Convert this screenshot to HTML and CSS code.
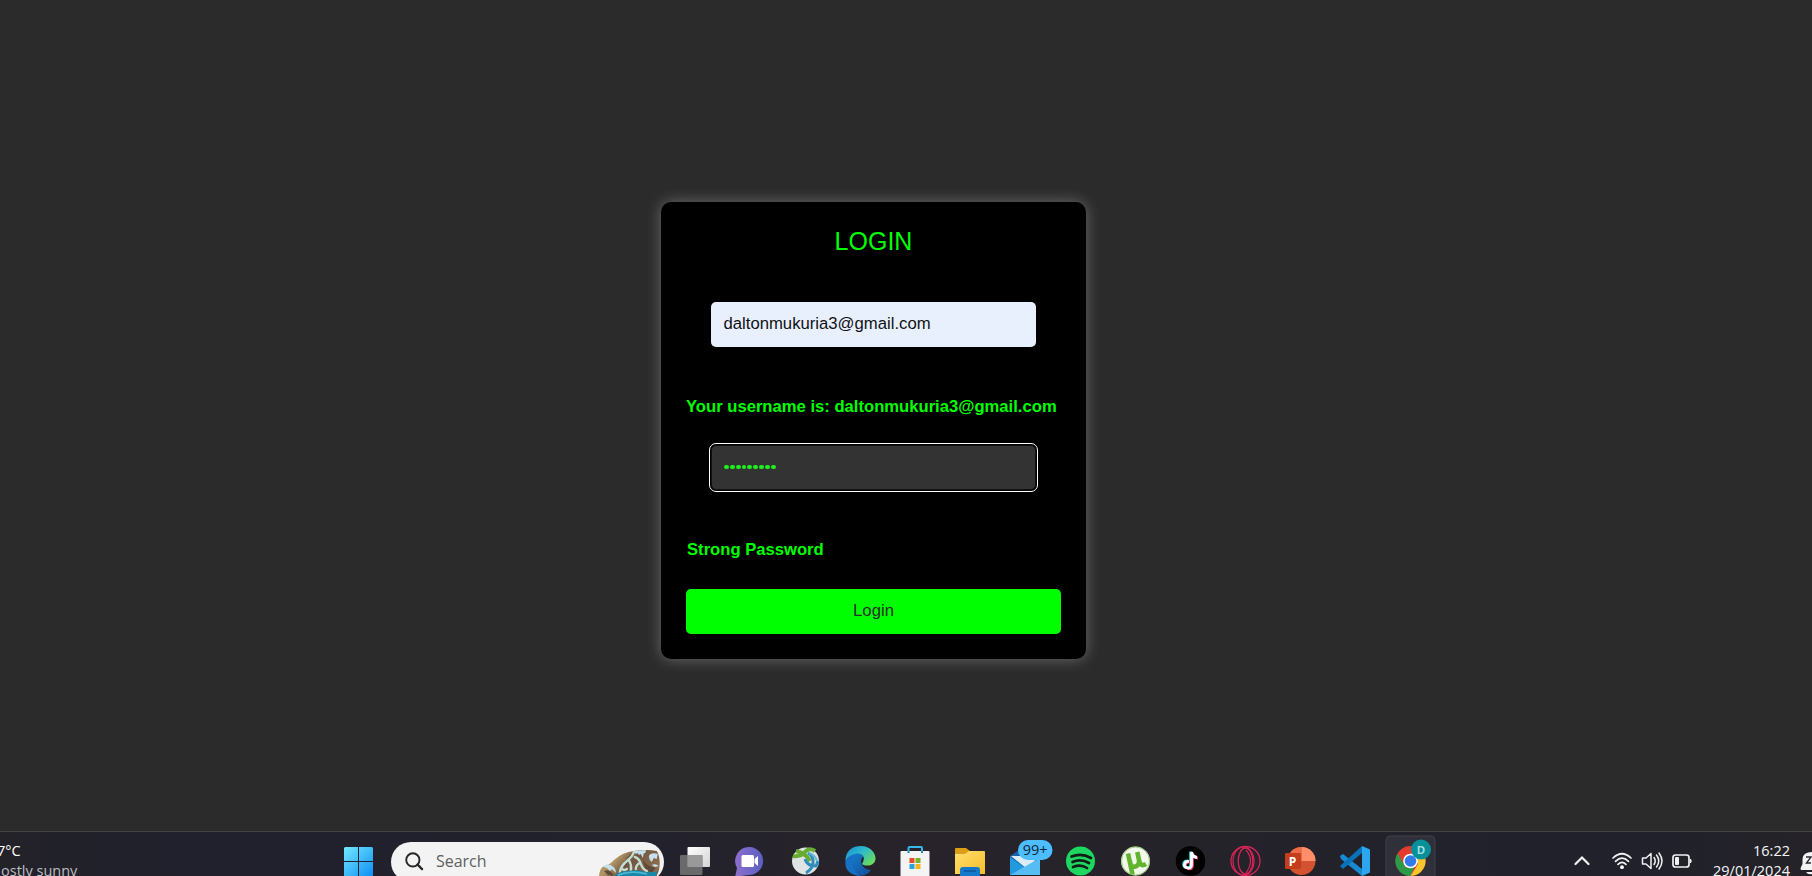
FILE: index.html
```html
<!DOCTYPE html>
<html lang="en">
<head>
<meta charset="utf-8">
<title>Login</title>
<link rel="stylesheet" href="styles.css">
</head>
<body>
<main class="page">
  <form class="card">
    <h1 class="title">LOGIN</h1>
    <input class="field field-user" type="text" value="daltonmukuria3@gmail.com">
    <p class="note">Your username is: daltonmukuria3@gmail.com</p>
    <div class="field field-pass"><i></i><i></i><i></i><i></i><i></i><i></i><i></i><i></i><i></i></div>
    <p class="note note-strength">Strong Password</p>
    <button class="submit" type="button">Login</button>
  </form>
</main>
<footer class="taskbar">
  <div class="weather"><span class="temp">7°C</span><span class="sky">ostly sunny</span></div>
  <svg class="start" viewBox="0 0 30 30"><defs><linearGradient id="win" x1="0" y1="0" x2="30" y2="30" gradientUnits="userSpaceOnUse"><stop stop-color="#74e8fd"/><stop offset="1" stop-color="#0a8cf5"/></linearGradient></defs><path fill="url(#win)" d="M1 0H14V14H0V1ZM15 0H28L29 1V14H15ZM0 15H14V29H0ZM15 15H29V29H15Z"/></svg>
  <div class="search">
    <svg class="lens" viewBox="0 0 20 20"><circle cx="8.3" cy="8.3" r="7" fill="none" stroke="#26262b" stroke-width="2"/><path d="M13.2 13.2L18 18" stroke="#26262b" stroke-width="2.5" stroke-linecap="round"/></svg>
    <span class="search-text">Search</span>
    <svg class="art" viewBox="0 0 66 37">
      <defs><linearGradient id="rock" x2="1" y2=".4"><stop stop-color="#a18256"/><stop offset=".35" stop-color="#b29567"/><stop offset=".6" stop-color="#705640"/><stop offset="1" stop-color="#8a6b4c"/></linearGradient></defs>
      <path fill="url(#rock)" d="M1 37Q1 28 6 25Q12 24 16 19Q25 11 36 10Q50 8 59 10Q62 14 62 23Q62 31 58 37Z"/>
      <path fill="#5f4a38" d="M24 25Q30 14 36 11L34 16 27 26ZM45 19Q50 26 58 27L54 32 48 29ZM6 30Q12 27 16 35L10 34Z"/>
      <path d="M22 31Q23 25 29 20T36 11M31 19Q34 24 33 29M37 16Q41 17 43 23T49 30M24 28Q27 30 29 28M42 22Q38 24 38 28" fill="none" stroke="#c4ddd0" stroke-width="2.4" stroke-linecap="round"/>
      <path fill="#c5e1f0" d="M36 10L48 9Q48 13 46 12L45 17 43 13 41 14 40 12 38 13ZM51 15Q53 11 60 13L59 18 56 17 54 21 52 19ZM5 26Q9 21 14 25Q18 27 18 32L14 28 12 30 9 27ZM54 24Q58 22 61 25L57 26Z"/>
      <path fill="#1687ad" d="M15 37Q20 30 30 30Q40 28 48 31Q55 32 60 30L57 37Z"/><path d="M20 34Q34 29 49 33" stroke="#4fb5cc" stroke-width="1.7" fill="none"/>
    </svg>
  </div>
  <nav class="apps">
    <svg viewBox="0 0 55 45"><defs><linearGradient id="tv" x2="1" y2="1"><stop stop-color="#fff"/><stop offset="1" stop-color="#d3d3d3"/></linearGradient></defs><rect x="19.5" y="16" width="22.5" height="20" rx="1" fill="url(#tv)"/><rect x="12" y="24" width="22.5" height="20" rx="1" fill="#777" opacity=".85"/><path d="M19.5 24H34.5V36H19.5Z" fill="#999"/></svg>
    <svg viewBox="0 0 55 45"><defs><linearGradient id="chat" x2="1" y2="0"><stop stop-color="#8d70cd"/><stop offset="1" stop-color="#5b5fc1"/></linearGradient></defs><path fill="url(#chat)" d="M12.3 45L14 37A14 14 0 1 1 26 44L18 45Z"/><rect x="18.5" y="24" width="12.5" height="12" rx="1.5" fill="#fff"/><path d="M31.5 28L35 25V35L31.5 32Z" fill="#fff"/></svg>
    <svg viewBox="0 0 55 45"><circle cx="27.5" cy="30" r="13.5" fill="#dfe3e4"/><path d="M15 25Q23 26 27 21T37 20M18 20Q28 22 32 30" fill="none" stroke="#68ad32" stroke-width="4"/><path d="M28 42Q36 37 35 29Q34 24 30 22M27 28Q29 35 38 35Q39 33 40 30" fill="none" stroke="#2d8ebd" stroke-width="3"/><path d="M31 22Q37 24 39 30" fill="none" stroke="#62b8d4" stroke-width="2"/></svg>
    <svg viewBox="0 0 55 45"><defs><linearGradient id="e1" x2="1" y2=".7"><stop stop-color="#168bd2"/><stop offset=".5" stop-color="#2eb9ce"/><stop offset="1" stop-color="#69dc5b"/></linearGradient><linearGradient id="e2" x2="1" y2="1"><stop stop-color="#168ad4"/><stop offset="1" stop-color="#134b9c"/></linearGradient></defs><path fill="url(#e2)" d="M12.5 29C14 14 35 17 34 26C26 23 25 38 38 39C32 49 13 46 12.5 29Z"/><path fill="url(#e1)" d="M12.5 29C13 19 20 15 28 15C37 15 43 22 42.5 28C42 35 33 36 29 33C36 22 22 18 12.5 29Z"/><path d="M23 25Q14 35 27 45Q11 43 12.5 30Q16 23 23 25" fill="#1870c5"/></svg>
    <svg viewBox="0 0 55 45"><path d="M20.5 22V17Q20.5 16 21.5 16H33Q34 16 34 17V22" fill="none" stroke="#39b7ed" stroke-width="2"/><path fill="#f4f4f4" d="M12.5 21Q12.5 20 13.5 20H40.5Q41.5 20 41.5 21V45H12.5Z"/><path d="M20.5 20V22M34 20V22" stroke="#168cc5" stroke-width="2"/><path fill="#e64c25" d="M21.5 27H26.5V32H21.5Z"/><path fill="#77b326" d="M27.5 27H32.5V32H27.5Z"/><path fill="#29a2dd" d="M21.5 33H26.5V38H21.5Z"/><path fill="#f4b21b" d="M27.5 33H32.5V38H27.5Z"/></svg>
    <svg viewBox="0 0 55 45"><defs><linearGradient id="fold" x2="1" y2="1"><stop stop-color="#ffdf70"/><stop offset="1" stop-color="#f7bd27"/></linearGradient></defs><path fill="#dd9d15" d="M12 18Q12 17 13 17H23L27 20V28H12Z"/><path fill="url(#fold)" d="M12 23H22L26 20H41Q42 20 42 21V43H12Z"/><path fill="#1479ca" d="M17 45V39Q17 36 20 36H34Q37 36 37 39V45Z"/><path d="M21 40H33" stroke="#0b549b" stroke-width="1.5"/></svg>
    <svg viewBox="0 0 55 45"><path fill="#1763a6" d="M12 25L27 15 42 25V36H12Z"/><path fill="#dcecf6" d="M13 25H41L29 38Z"/><path fill="#2199df" d="M12 26L30 39 42 29V44H12Z"/><path fill="#55bdf3" d="M12 44L42 27V44Z"/><rect x="20" y="9" width="34.5" height="20" rx="10" fill="#4cbdff"/><text x="37.2" y="24" class="badge-text">99+</text></svg>
    <svg viewBox="0 0 55 45"><circle cx="27.5" cy="30" r="14.5" fill="#1ed760"/><path d="M18.5 25.5Q28.5 21.5 38 27M19.5 31Q28 27.5 36 32M20 36Q28 33 34 37" fill="none" stroke="#111d18" stroke-width="2.7" stroke-linecap="round"/></svg>
    <svg viewBox="0 0 55 45"><circle cx="27.5" cy="30" r="14.5" fill="#f2f8eb"/><path d="M20 22.5L24.5 43.5M21.8 30Q23 37 27.5 35.5Q32 34 30.8 28L29.3 21M31 29Q32.5 36.5 38 33" fill="none" stroke="#61b52d" stroke-width="4.6"/><circle cx="27.5" cy="30" r="14" fill="none" stroke="#72bd45" stroke-width=".7"/></svg>
    <svg viewBox="0 0 55 45"><circle cx="27.5" cy="30" r="14.8" fill="#000"/><g fill="none" stroke-width="2.8"><path d="M28.5 21V34Q28 38 24.5 37Q20 36 22 32Q23 30 26 30.5M28.5 21Q29 26 34 26.5" stroke="#25d9e0" transform="translate(-.9 -.5)"/><path d="M28.5 21V34Q28 38 24.5 37Q20 36 22 32Q23 30 26 30.5M28.5 21Q29 26 34 26.5" stroke="#f33d68" transform="translate(1 .7)"/><path d="M28.5 21V34Q28 38 24.5 37Q20 36 22 32Q23 30 26 30.5M28.5 21Q29 26 34 26.5" stroke="#fff"/></g></svg>
    <svg viewBox="0 0 55 45"><g fill="none" stroke="#d52456"><circle cx="27.5" cy="30" r="14.5" stroke-width="1.3"/><ellipse cx="25.5" cy="30" rx="10.5" ry="14" stroke-width="1.2"/><ellipse cx="27.5" cy="30" rx="7.3" ry="13" stroke-width="1.3"/><path d="M28 19Q37 29 28 42" stroke-width="1.2"/></g></svg>
    <svg viewBox="0 0 55 45"><circle cx="28.5" cy="30" r="14" fill="#d35230"/><path fill="#ff8f6b" d="M28.5 30V16A14 14 0 0 1 42.5 30Z"/><path fill="#ed6c47" d="M28.5 16V30H14.5A14 14 0 0 1 28.5 16"/><rect x="12" y="22" width="16" height="16" rx="1" fill="#c43e1c"/><text x="19.5" y="34.5" class="ppt-text">P</text></svg>
    <svg viewBox="0 0 55 45"><path fill="#168bd3" d="M12 25L15 23 34 38V45L13 28Z"/><path fill="#0873b9" d="M12 35L34 15V22L15 38Z"/><path fill="#2ca6ee" d="M34 15L42 18.5V41.5L34 45Z"/></svg>
    <svg viewBox="0 0 55 45"><path d="M3 45V9Q3 5 7 5H48Q52 5 52 9V45" fill="#30303a" stroke="#3e3e47"/><circle cx="27.5" cy="30" r="15" fill="#e33b2e"/><path fill="#2a9b49" d="M14.5 22.5L23 37 33 32 27.5 45A15 15 0 0 1 14.5 22.5"/><path fill="#fbc52d" d="M28 22.5H40.5A15 15 0 0 1 27.5 45L35 33Z"/><circle cx="27.5" cy="30" r="7.3" fill="#fff"/><circle cx="27.5" cy="30" r="5.8" fill="#327bea"/><circle cx="38" cy="18.5" r="10" fill="#07909a"/><text x="38" y="22.7" class="profile-text">D</text></svg>
  </nav>
  <svg class="tray" viewBox="0 0 130 45">
    <g fill="none" stroke="#f1f1f3"><path d="M3.5 33L10 26.5L16.5 33" stroke-width="2.2" stroke-linecap="round"/>
    <path d="M41 27Q50 18.5 59 27M43.5 30.3Q50 24 56.5 30.3M46 33.4Q50 29.5 54 33.4" stroke-width="1.7" stroke-linecap="round"/>
    <path d="M70.5 27H74L79 22.5V37.5L74 33H70.5Z" stroke-width="1.5" stroke-linejoin="round"/><path d="M82 26.5Q84.5 30 82 33.5M84.5 24Q89 30 84.5 36M87 22Q93 30 87 38" stroke-width="1.5" stroke-linecap="round"/>
    <rect x="101" y="24" width="16" height="12" rx="2.5" stroke-width="1.7"/></g><circle cx="50" cy="36.2" r="1.9" fill="#fff"/><rect x="103" y="26" width="4" height="8" rx="1" fill="#f1f1f3"/><path d="M118 28H119Q120.5 30 119 32H118Z" fill="#f1f1f3"/>
  </svg>
  <div class="clock"><span>16:22</span><span>29/01/2024</span></div>
  <svg class="bell" viewBox="0 0 12 45"><path fill="#f4f4f5" d="M1 39Q0 38 1 36L2.5 33V28Q3 21 12 21V39ZM6 41H12V43Q8 44 6 41"/><path d="M6 26H11L6.5 32H11" fill="none" stroke="#292932" stroke-width="1.4"/></svg>
</footer>
</body>
</html>
```
FILE: styles.css
```css
* { box-sizing: border-box; }
html { height: 876px; overflow: hidden; }
body { margin: 0; height: 876px; overflow: hidden; display: flex; flex-direction: column; background: #2b2b2b; font-family: "Liberation Sans", Arial, sans-serif; }
.page { height: 831px; flex: none; padding: 202px 0 0 661px; }
.card { width: 425px; height: 457px; padding: 25px; display: flex; flex-direction: column; align-items: center; border-radius: 10px; background: #000; box-shadow: 0 0 15px rgba(255,255,255,.3); }
.title { margin: 0; height: 29px; font-size: 25px; line-height: 29px; font-weight: 400; color: #0f0; }
.field { width: 325px; height: 45px; padding: 0 12.5px; border: 0; border-radius: 5px; flex: none; }
.field-user { margin-top: 46px; background: #e8f0fe; color: #101014; font: 16.7px "Liberation Sans", Arial, sans-serif; padding-bottom: 2px; }
.note { margin: 50px 0 0; width: 375px; height: 20px; line-height: 20px; font-size: 16.64px; font-weight: 700; color: #0f0; white-space: nowrap; }
.field-pass { margin-top: 28px; display: flex; align-items: center; gap: 1px; padding: 0 12px 1px; background: #333; border: 1px solid #101010; outline: 1px solid #fff; outline-offset: 1px; }
.field-pass i { width: 4.85px; height: 4.85px; border-radius: 50%; background: #1fef1f; }
.note-strength { padding-left: 1px; }
.submit { flex: none; margin-top: 29px; width: 375px; height: 45px; border: 0; border-radius: 5px; padding: 0 0 2px; background: #0f0; color: #2b2b2b; font: 16.7px "Liberation Sans", Arial, sans-serif; }
.taskbar { height: 45px; flex: none; display: flex; overflow: hidden; border-top: 1px solid #444347; background: linear-gradient(90deg,#232229,#20212d 12%,#22222c 35%,#28232a 50%,#252329 62%,#22222c 80%,#20212b 90%,#252329); font-family: "Open Sans", "Noto Sans", sans-serif; }
.weather { width: 344px; padding-top: 9px; display: flex; flex-direction: column; font-size: 14.5px; line-height: 20px; color: #fff; }
.temp { margin-left: -3px; }
.sky { padding-left: 1px; color: #bdbdc4; }
.start { width: 30px; height: 30px; margin-top: 15px; }
.search { width: 273px; height: 40px; margin: 10px 4px 0 17px; display: flex; flex: none; border-radius: 20px; background: #f3f3f3; overflow: hidden; }
.lens { width: 19px; height: 19px; margin: 10px 12px 0 14px; }
.search-text { width: 163px; font-size: 16px; line-height: 39px; color: #5f5f62; }
.art { width: 66px; height: 37px; margin-top: -1px; }
.apps { display: grid; grid-template-columns: repeat(14,55px); height: 45px; margin-top: -1px; }
.apps svg { width: 55px; height: 45px; }
.badge-text { font: 14.5px "Open Sans", sans-serif; fill: #132638; text-anchor: middle; }
.ppt-text { font: 700 12px "Open Sans", sans-serif; fill: #fff; text-anchor: middle; }
.profile-text { font: 700 11px "Liberation Sans", sans-serif; fill: #a6e1e4; text-anchor: middle; }
.tray { width: 130px; height: 45px; margin: -1px 0 0 134px; }
.clock { width: 88px; padding-top: 9px; display: flex; flex-direction: column; text-align: right; font-size: 14.5px; line-height: 20px; color: #f5f5f7; }
.bell { width: 12px; height: 45px; margin: -1px 0 0 10px; }
```
